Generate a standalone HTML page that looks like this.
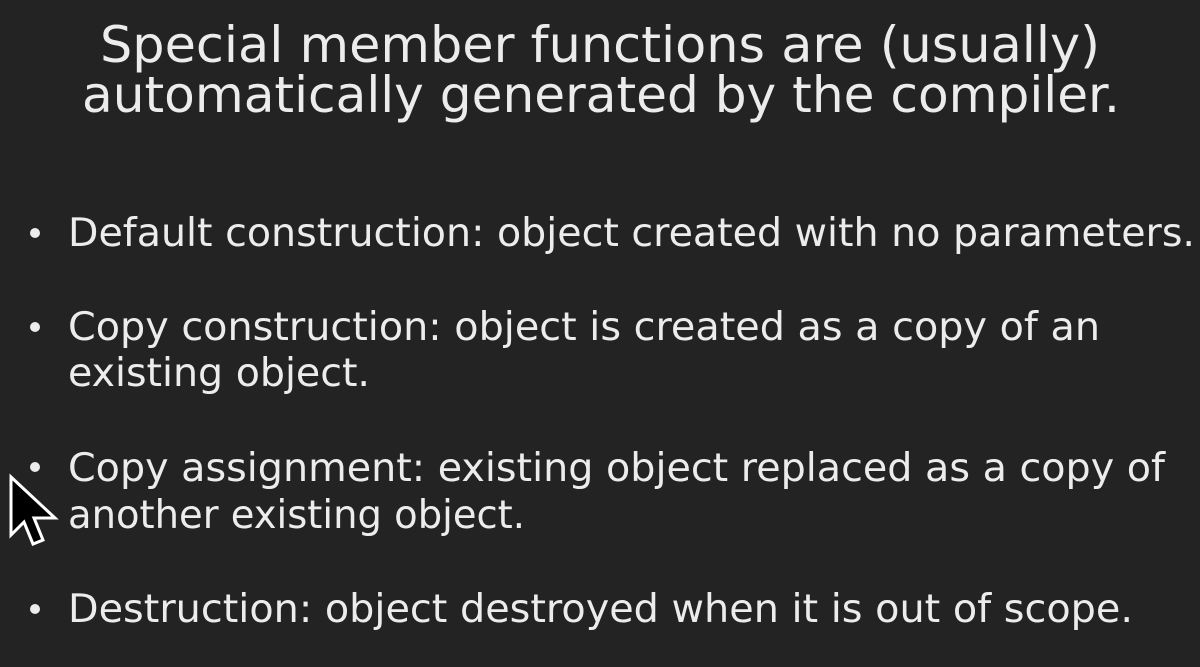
<!DOCTYPE html>
<html><head><meta charset="utf-8"><style>
html,body{margin:0;padding:0;background:#232323;width:1200px;height:667px;overflow:hidden}
svg{display:block}
text{font-family:"DejaVu Sans","Liberation Sans",sans-serif;fill:#ececec}
.t{font-size:50px}
.b{font-size:39px}
</style></head><body>
<svg width="1200" height="667" viewBox="0 0 1200 667">
<rect width="1200" height="667" fill="#232323"/>
<text class="t" x="100" y="62" textLength="1000" lengthAdjust="spacingAndGlyphs">Special member functions are (usually)</text>
<text class="t" x="82" y="112" textLength="1038" lengthAdjust="spacingAndGlyphs">automatically generated by the compiler.</text>
<g fill="#ececec">
<circle cx="35" cy="233" r="5"/>
<circle cx="35" cy="327" r="5"/>
<circle cx="35" cy="467" r="5"/>
<circle cx="35" cy="609" r="5"/>
</g>
<text class="b" x="68" y="246" textLength="1127" lengthAdjust="spacingAndGlyphs">Default construction: object created with no parameters.</text>
<text class="b" x="68" y="340" textLength="1032" lengthAdjust="spacingAndGlyphs">Copy construction: object is created as a copy of an</text>
<text class="b" x="68" y="386" textLength="302" lengthAdjust="spacingAndGlyphs">existing object.</text>
<text class="b" x="68" y="481" textLength="1097" lengthAdjust="spacingAndGlyphs">Copy assignment: existing object replaced as a copy of</text>
<text class="b" x="68" y="528" textLength="457" lengthAdjust="spacingAndGlyphs">another existing object.</text>
<text class="b" x="68" y="622" textLength="1065" lengthAdjust="spacingAndGlyphs">Destruction: object destroyed when it is out of scope.</text>
<path d="M11 477 L11 535 L24 522 L33 544 L43 540 L34 518 L55 518 Z" fill="#000" stroke="#fff" stroke-width="3" stroke-linejoin="miter"/>
</svg>
</body></html>
